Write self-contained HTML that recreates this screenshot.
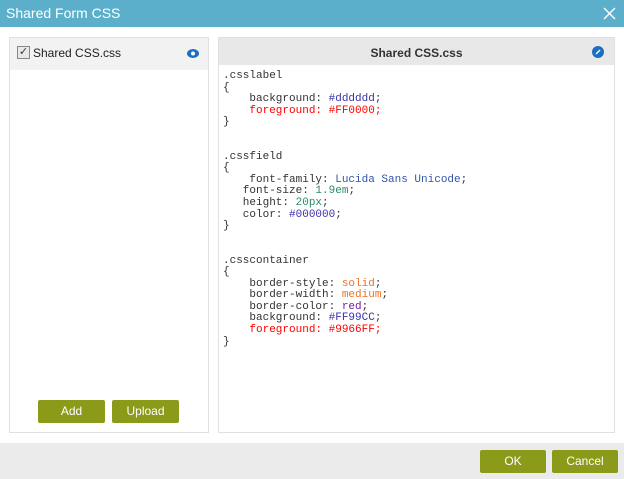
<!DOCTYPE html>
<html><head><style>
body{margin:0;width:624px;height:479px;overflow:hidden;font-family:"Liberation Sans",sans-serif;background:#fff;position:relative}
.t{position:absolute;left:0;top:0;width:624px;height:27px;background:#5cafcb;color:#fff;font-size:14px}
.t span{position:absolute;left:6px;top:5px}
.lp{position:absolute;left:9px;top:37px;width:198px;height:394px;border:1px solid #e0e0e0}
.lh{height:32px;background:#f2f2f2;position:relative;font-size:12px}
.rp{position:absolute;left:218px;top:37px;width:395px;height:394px;border:1px solid #e0e0e0}
.rh{height:27px;background:#e8e8e8;text-align:center;font-weight:bold;font-size:12px;line-height:30px;position:relative;color:#333}
.btn{position:absolute;background:#8c9a1a;color:#fff;font-size:12px;text-align:center;border-radius:2px;line-height:23px;height:23px}
pre{margin:0;position:absolute;left:4px;top:33px;font-family:"Liberation Mono",monospace;font-size:11px;line-height:11.55px;color:#333}
.b{color:#3a33aa}.r{color:#f00}.g{color:#2a8a6a}.o{color:#f07020}.p{color:#7a1aa0}.l{color:#3355aa}
.f{position:absolute;left:0;top:443px;width:624px;height:36px;background:#ebebeb}
</style></head><body>
<div class="t"><span>Shared Form CSS</span>
<svg style="position:absolute;left:603px;top:7px" width="13" height="13"><path d="M1 1L12 12M12 1L1 12" stroke="#fff" stroke-width="1.4"/></svg></div>
<div class="lp"><div class="lh">
<span style="position:absolute;left:7px;top:8px;width:11px;height:11px;border:1px solid #888;background:#e8e8e8;font-size:11px;line-height:11px;color:#334;text-align:center">✓</span>
<span style="position:absolute;left:23px;top:8px;color:#222">Shared CSS.css</span>
<svg style="position:absolute;left:177px;top:11px" width="12" height="9"><ellipse cx="6" cy="4.5" rx="6" ry="4.5" fill="#1a6fc0"/><circle cx="6" cy="4.5" r="2" fill="#fff"/></svg>
</div>
<div class="btn" style="left:28px;top:362px;width:67px">Add</div>
<div class="btn" style="left:102px;top:362px;width:67px">Upload</div>
</div>
<div class="rp"><div class="rh">Shared CSS.css
<svg style="position:absolute;left:373px;top:8px" width="12" height="12"><circle cx="6" cy="6" r="6" fill="#1a6fc0"/><path d="M3.5 8.5L4 7L7.5 3.5L8.5 4.5L5 8Z" fill="#fff"/></svg></div>
<pre>.csslabel
{
    background: <span class="b">#dddddd</span>;
    <span class="r">foreground: #FF0000;</span>
}


.cssfield
{
    font-family: <span class="l">Lucida Sans Unicode</span>;
   font-size: <span class="g">1.9em</span>;
   height: <span class="g">20px</span>;
   color: <span class="b">#000000</span>;
}


.csscontainer
{
    border-style: <span class="o">solid</span>;
    border-width: <span class="o">medium</span>;
    border-color: <span class="p">red</span>;
    background: <span class="b">#FF99CC</span>;
    <span class="r">foreground: #9966FF;</span>
}</pre>
</div>
<div class="f">
<div class="btn" style="left:480px;top:7px;width:66px">OK</div>
<div class="btn" style="left:552px;top:7px;width:66px">Cancel</div>
</div>
</body></html>
